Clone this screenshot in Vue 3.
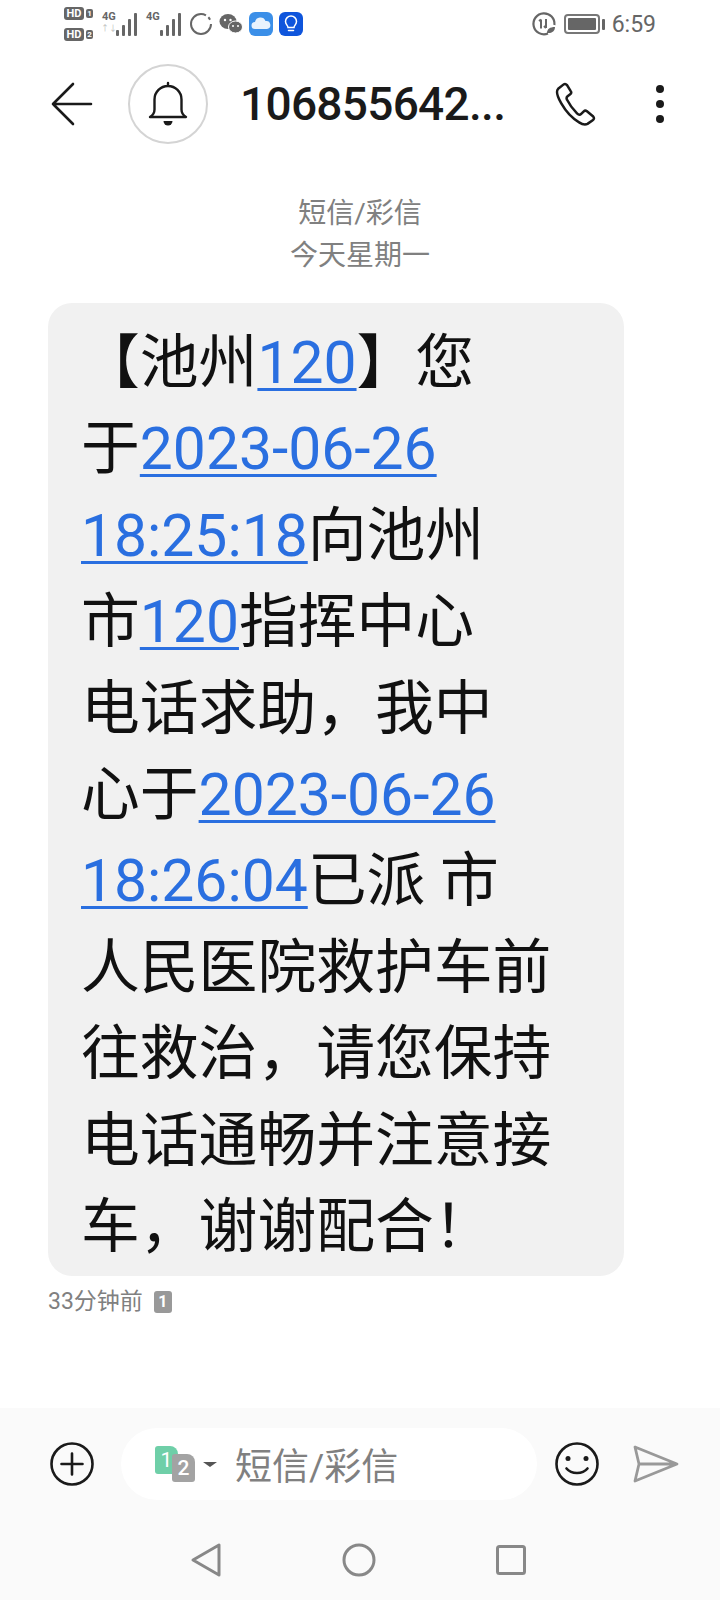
<template>
  <div class="screen">
    <!-- 状态栏 -->
    <div class="status-bar">
      <div class="status-left">
        <div class="hd-col">
          <div class="hd-row"><span class="hd">HD</span><span class="sim-no">1</span></div>
          <div class="hd-row"><span class="hd">HD</span><span class="sim-no">2</span></div>
        </div>
        <div class="signal" v-for="(s, i) in signals" :key="i">
          <span class="net">4G</span>
          <span v-if="s.arrow" class="arrows">↑↓</span>
          <svg width="24" height="24" viewBox="0 0 24 24"><rect v-for="b in bars" :key="b.x" :x="b.x" :y="b.y" width="3" :height="24 - b.y" rx="1" fill="#666" /></svg>
        </div>
        <svg class="ring" width="24" height="24" viewBox="0 0 24 24"><circle cx="12" cy="12" r="10" fill="none" stroke="#666" stroke-width="2" stroke-dasharray="52 3 3 5" /></svg>
        <svg width="24" height="24" viewBox="0 0 24 24"><ellipse cx="9" cy="9.5" rx="8.5" ry="7.5" fill="#666" /><ellipse cx="16.5" cy="15" rx="7" ry="6" fill="#666" stroke="#fff" stroke-width="1" /><circle cx="6" cy="8" r="1.2" fill="#fff" /><circle cx="11.5" cy="8" r="1.2" fill="#fff" /><circle cx="14" cy="14" r="1" fill="#fff" /><circle cx="19" cy="14" r="1" fill="#fff" /></svg>
        <svg width="24" height="24" viewBox="0 0 24 24"><rect width="24" height="24" rx="6" fill="#3b8fe8" /><path d="M6 17a3.5 3.5 0 0 1 0-7 5.5 5.5 0 0 1 10.5-1 4 4 0 0 1 1.5 8z" fill="#e8f2fd" /></svg>
        <svg width="24" height="24" viewBox="0 0 24 24"><rect width="24" height="24" rx="6" fill="#0f55dc" /><path d="M9 15.500c0-2-2.500-3-2.500-6a5.500 5.500 0 0 1 11 0c0 3-2.500 4-2.500 6zM9.500 18.500h5" fill="none" stroke="#fff" stroke-width="1.500" stroke-linecap="round" /></svg>
      </div>
      <div class="status-right">
        <svg width="26" height="26" viewBox="0 0 26 26"><path d="M17 22.500A10.500 10.500 0 1 1 23.400 14" fill="none" stroke="#666" stroke-width="2.200" /><path d="M10 8.500l-2 1.500M10 8.500v9M15 8v9M15 17l-2-2" fill="none" stroke="#666" stroke-width="2" /><path d="M16 22c0-4 3-6 8-6 0 4-3 6.500-8 6z" fill="#666" /></svg>
        <span class="battery"><span class="battery-body"><span class="battery-fill"></span></span><span class="battery-cap"></span></span>
        <span class="time">6:59</span>
      </div>
    </div>

    <!-- 顶部导航 -->
    <header class="top-bar">
      <svg class="back" width="44" height="44" viewBox="0 0 44 44"><path d="M23 3L3 23l20 20M3 23h38" transform="translate(0 -1)" fill="none" stroke="#1a1a1a" stroke-width="2.600" stroke-linecap="round" stroke-linejoin="round" /></svg>
      <div class="avatar">
        <svg width="40" height="46" viewBox="0 0 40 46"><path d="M2 36c2.500-1.500 4.500-4 4.500-7.500V18.500a13.500 13.500 0 0 1 27 0v10c0 3.500 2 6 4.500 7.500zM20 5V2" fill="none" stroke="#1a1a1a" stroke-width="2.400" stroke-linejoin="round" stroke-linecap="round" /><path d="M15.500 40h9a4.500 4.500 0 0 1-9 0z" fill="#1a1a1a" /></svg>
      </div>
      <h1 class="title">106855642...</h1>
      <svg class="phone" width="44" height="44" viewBox="0 0 42 42"><path d="M8 2.500L3 6.500c-2 2-1 7 3 14s10 14 17 18c3 2 6 2.500 8 1.500l5-3.500c1.500-1 1.500-2.500.500-3.500l-6-5c-1-.8-2.200-.8-3 0l-2.500 2.500c-1 1-2.500 1-4-.5-4-4-7-8-9.500-13-.8-1.500-.5-2.500.500-3.300l2.500-2c1-.8 1.200-2 .5-3L11.500 3C10.500 1.800 9 1.700 8 2.500z" fill="none" stroke="#1a1a1a" stroke-width="2.400" stroke-linejoin="round" /></svg>
      <div class="more"><i></i><i></i><i></i></div>
    </header>

    <!-- 消息区域 -->
    <main class="messages">
      <div class="meta">
        <div>短信/彩信</div>
        <div>今天星期一</div>
      </div>
      <div class="bubble">
        <div class="line" v-for="(line, i) in lines" :key="i"><template v-for="(part, j) in line" :key="j"><a v-if="part.link" class="link">{{ part.text }}</a><span v-else>{{ part.text }}</span></template></div>
      </div>
      <div class="sent">
        <span>33分钟前</span>
        <span class="sim-badge">1</span>
      </div>
    </main>

    <!-- 输入栏 -->
    <footer class="bottom">
      <div class="composer">
        <svg width="46" height="46" viewBox="0 0 46 46"><circle cx="23" cy="23" r="20.500" fill="none" stroke="#1a1a1a" stroke-width="2.600" /><path d="M23 12.500v21M12.500 23h21" stroke="#1a1a1a" stroke-width="2.600" stroke-linecap="round" /></svg>
        <div class="input">
          <div class="sim-pick">
            <span class="card card-one">1</span>
            <span class="card card-two">2</span>
          </div>
          <span class="caret"></span>
          <span class="placeholder">短信/彩信</span>
        </div>
        <svg width="46" height="46" viewBox="0 0 46 46"><circle cx="23" cy="23" r="20.500" fill="none" stroke="#1a1a1a" stroke-width="2.600" /><circle cx="14" cy="17.500" r="2.500" fill="#1a1a1a" /><circle cx="32" cy="17.500" r="2.500" fill="#1a1a1a" /><path d="M12.500 27.500c5 6 16 6 21 0" fill="none" stroke="#1a1a1a" stroke-width="2.600" stroke-linecap="round" /></svg>
        <svg class="send" width="46" height="38" viewBox="0 0 46 38"><path d="M2 2l42 17L2 36l4-17zM6 19h38" fill="none" stroke="#999" stroke-width="2.800" stroke-linejoin="round" /></svg>
      </div>
      <nav class="nav-bar">
        <svg width="32" height="36" viewBox="0 0 32 36"><path d="M29 3v30L3 18z" fill="none" stroke="#888" stroke-width="3" stroke-linejoin="round" /></svg>
        <svg width="34" height="34" viewBox="0 0 34 34"><circle cx="17" cy="17" r="15" fill="none" stroke="#888" stroke-width="3" /></svg>
        <svg width="30" height="30" viewBox="0 0 30 30"><rect x="1.500" y="1.500" width="27" height="27" rx="2" fill="none" stroke="#888" stroke-width="3" /></svg>
      </nav>
    </footer>
  </div>
</template>

<script setup>
const signals = [{ arrow: true }, { arrow: false }];
const bars = [
  { x: 1, y: 18 },
  { x: 7, y: 13 },
  { x: 13, y: 7 },
  { x: 19, y: 1 },
];

const t = (text) => ({ text });
const l = (text) => ({ text, link: true });

// 短信内容，按截图换行
const lines = [
  [t("【池州"), l("120"), t("】您")],
  [t("于"), l("2023-06-26")],
  [l("18:25:18"), t("向池州")],
  [t("市"), l("120"), t("指挥中心")],
  [t("电话求助，我中")],
  [t("心于"), l("2023-06-26")],
  [l("18:26:04"), t("已派 市")],
  [t("人民医院救护车前")],
  [t("往救治，请您保持")],
  [t("电话通畅并注意接")],
  [t("车，谢谢配合！")],
];
</script>

<style>
html,
body {
  margin: 0;
  background: #fff;
}
</style>

<style scoped>
.screen {
  width: 720px;
  height: 1600px;
  display: flex;
  flex-direction: column;
  background: #fff;
  overflow: hidden;
  font-family: Roboto, "Noto Sans CJK SC", sans-serif;
  color: #1a1a1a;
}

/* 状态栏 */
.status-bar {
  height: 48px;
  margin-bottom: 2px;
  display: flex;
  align-items: center;
  justify-content: space-between;
  padding: 0 64px;
  box-sizing: border-box;
}

.status-left,
.status-right {
  display: flex;
  align-items: center;
}

.status-left {
  gap: 6px;
}

.status-right {
  gap: 7px;
}

.hd-col {
  display: flex;
  flex-direction: column;
  gap: 8px;
  margin-right: 2px;
}

.hd-row {
  display: flex;
  align-items: center;
  gap: 2px;
}

.hd {
  background: #666;
  color: #fff;
  border-radius: 3px;
  font-size: 11px;
  line-height: 13px;
  width: 20px;
  text-align: center;
  font-weight: 700;
}

.sim-no {
  background: #666;
  color: #fff;
  border-radius: 2px;
  width: 7px;
  font-size: 8px;
  line-height: 9px;
  text-align: center;
  font-weight: 700;
}

.signal {
  position: relative;
  width: 38px;
  height: 24px;
  display: flex;
  justify-content: flex-end;
}

.net {
  position: absolute;
  left: 1px;
  top: -1px;
  font-size: 11px;
  line-height: 12px;
  font-weight: 700;
  color: #666;
}

.arrows {
  position: absolute;
  left: 0;
  top: 12px;
  font-size: 8px;
  line-height: 10px;
  color: #bbb;
}

.battery {
  display: flex;
  align-items: center;
  gap: 2px;
}

.battery-body {
  width: 36px;
  height: 20px;
  border: 2px solid #777;
  border-radius: 4px;
  padding: 2px;
  box-sizing: border-box;
  display: flex;
}

.battery-fill {
  flex: 1;
  background: #666;
  border-radius: 1px;
}

.battery-cap {
  width: 3px;
  height: 11px;
  background: #666;
  border-radius: 1px;
}

.time {
  font-size: 23px;
  color: #666;
}

/* 顶部导航 */
.top-bar {
  height: 108px;
  display: flex;
  align-items: center;
  padding-left: 50px;
  box-sizing: border-box;
}

.avatar {
  width: 76px;
  height: 76px;
  margin-left: 34px;
  border: 2px solid #d4d4d4;
  border-radius: 50%;
  display: flex;
  align-items: center;
  justify-content: center;
}

.title {
  margin: 0 0 0 32px;
  width: 315px;
  font-size: 46px;
  line-height: 60px;
  font-weight: 500;
  letter-spacing: -0.7px;
  white-space: nowrap;
}

.more {
  display: flex;
  flex-direction: column;
  gap: 7px;
  margin-left: 57px;
}

.more i {
  width: 8px;
  height: 8px;
  border-radius: 50%;
  background: #1a1a1a;
}

/* 消息区域 */
.messages {
  flex: 1;
  min-height: 0;
}

.meta {
  margin-top: 35px;
  text-align: center;
  color: #808080;
  font-size: 28px;
  line-height: 42px;
}

.bubble {
  width: 576px;
  height: 973px;
  margin: 26px 0 0 48px;
  padding: 17px 33px 0;
  box-sizing: border-box;
  background: #f1f1f1;
  border-radius: 24px;
}

.line {
  height: 86.4px;
  line-height: 86.4px;
  font-size: 58.8px;
  white-space: pre;
  color: #111;
}

.link {
  color: #2a6fe0;
  text-decoration: underline;
  text-decoration-thickness: 3px;
  text-underline-offset: 5px;
}

.sent {
  margin: 11px 0 0 48px;
  display: flex;
  align-items: center;
  gap: 11px;
  font-size: 23px;
  line-height: 30px;
  color: #808080;
}

.sim-badge {
  width: 18px;
  height: 22px;
  border-radius: 3px;
  background: #999;
  color: #fff;
  font-size: 16px;
  line-height: 22px;
  font-weight: 700;
  text-align: center;
}

/* 输入栏 */
.bottom {
  height: 192px;
  background: #fafafa;
  display: flex;
  flex-direction: column;
}

.composer {
  height: 112px;
  display: flex;
  align-items: center;
  padding: 0 0 0 49px;
  box-sizing: border-box;
}

.composer svg {
  flex: none;
}

.input {
  width: 416px;
  height: 72px;
  margin: 0 17px 0 26px;
  flex: none;
  display: flex;
  align-items: center;
  background: #fff;
  border-radius: 36px;
  box-sizing: border-box;
  padding-left: 34px;
}

.sim-pick {
  position: relative;
  width: 40px;
  height: 36px;
}

.card {
  position: absolute;
  width: 23px;
  height: 28px;
  border-radius: 3px 8px 3px 3px;
  color: #fff;
  font-size: 21px;
  line-height: 28px;
  text-align: center;
}

.card-one {
  left: 0;
  top: 0;
  background: #6fcfa8;
}

.card-two {
  left: 17px;
  top: 8px;
  background: #a3a3a3;
  font-weight: 500;
}

.caret {
  width: 0;
  height: 0;
  margin-left: 8px;
  border-left: 7px solid transparent;
  border-right: 7px solid transparent;
  border-top: 5px solid #555;
}

.placeholder {
  margin-left: 18px;
  font-size: 37px;
  color: #808080;
}

.send {
  margin-left: 33px;
}

.nav-bar {
  flex: 1;
  display: flex;
  align-items: center;
  justify-content: center;
  gap: 120px;
  padding-right: 4px;
}
</style>
